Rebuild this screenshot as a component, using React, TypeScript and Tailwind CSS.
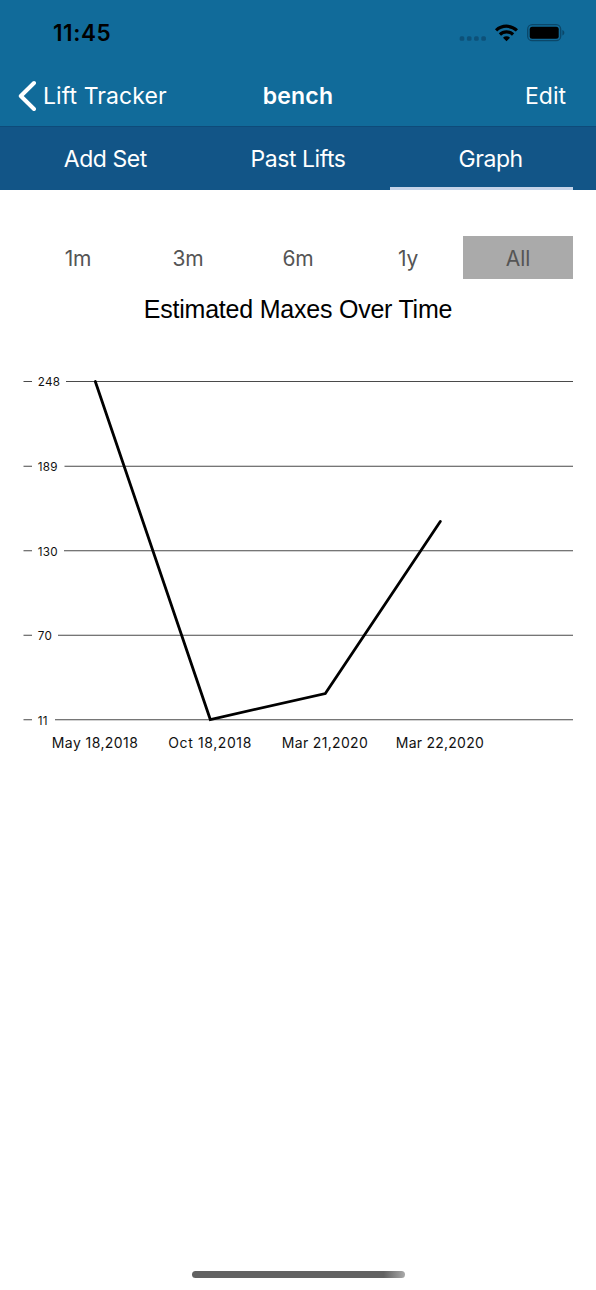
import clsx from "clsx";

const tabs = ["Add Set", "Past Lifts", "Graph"];
const ranges = ["1m", "3m", "6m", "1y", "All"];

// lineStart is where the grid line picks up after its label
const gridLines = [
  { value: 248, y: 381.5, lineStart: 66 },
  { value: 189, y: 466.2, lineStart: 64.5 },
  { value: 130, y: 550.7, lineStart: 64 },
  { value: 70, y: 635.3, lineStart: 58 },
  { value: 11, y: 719.8, lineStart: 55 },
];

const points = [
  { label: "May 18,2018", x: 95.3, y: 381.5, width: 86 },
  { label: "Oct 18,2018", x: 210.3, y: 719.5, width: 83 },
  { label: "Mar 21,2020", x: 325.3, y: 693.5, width: 86 },
  { label: "Mar 22,2020", x: 440.3, y: 521.5, width: 88 },
];

function StatusBar() {
  return (
    <div className="flex h-[66px] items-center justify-between pr-[31px] pl-[53px] text-black">
      <span className="text-[22.5px] font-semibold tracking-[0.6px]">11:45</span>
      <svg width="106" height="22" viewBox="459 22 106 22">
        <g fill="#0d5179">
          <rect x="459.7" y="36.2" width="4.6" height="4.6" rx="1.5" />
          <rect x="466.9" y="36.2" width="4.6" height="4.6" rx="1.5" />
          <rect x="474.1" y="36.2" width="4.6" height="4.6" rx="1.5" />
          <rect x="481.3" y="36.2" width="4.6" height="4.6" rx="1.5" />
        </g>
        <g fill="none" stroke="black" strokeWidth="3.2">
          <path d="M496.1 30.4 A15 15 0 0 1 516.9 30.4" />
          <path d="M499.9 34.5 A9.4 9.4 0 0 1 513.1 34.5" />
        </g>
        <path d="M503 37.7 A5 5 0 0 1 510 37.7 L506.5 41.2 Z" fill="black" />
        <rect x="527.7" y="24.7" width="33" height="16" rx="4.5" fill="none" stroke="#0b4769" strokeWidth="1.3" />
        <rect x="529.7" y="26.7" width="29" height="12" rx="2.5" fill="black" />
        <path d="M562.4 30 C565 31 565 34.5 562.4 35.5 Z" fill="#0b4769" />
      </svg>
    </div>
  );
}

function NavBar() {
  return (
    <nav className="grid h-[60px] grid-cols-[1fr_auto_1fr] items-center pt-px pr-[30px] pl-[18px] text-[23px]">
      <button className="flex items-center gap-[7px] text-left tracking-[0.08px] whitespace-nowrap">
        <svg width="18" height="32" viewBox="0 0 18 32" className="-mt-px">
          <path d="M16 3 L2.8 16 L16 29" fill="none" stroke="white" strokeWidth="4" strokeLinecap="round" strokeLinejoin="round" />
        </svg>
        Lift Tracker
      </button>
      <h1 className="pl-[12px] font-semibold tracking-[0.15px]">bench</h1>
      <button className="text-right">Edit</button>
    </nav>
  );
}

function TabBar() {
  return (
    <div className="relative h-16 border-t border-[#0e4b7a] bg-[#125587]">
      <div className="mr-[9px] ml-[9px] grid h-full grid-cols-3 pt-px text-[23px] tracking-[-0.45px]">
        {tabs.map((tab) => (
          <button key={tab}>{tab}</button>
        ))}
      </div>
      <div className="absolute right-[23px] bottom-0 h-[3px] w-[183px] bg-[#c4d3e8]" />
    </div>
  );
}

function MaxesChart() {
  return (
    <svg width="596" height="420" viewBox="0 345 596 420" className="block">
      {gridLines.map((line) => (
        <g key={line.value}>
          <path d={`M23.5 ${line.y} H32 M${line.lineStart} ${line.y} H573`} stroke="#4a4a4a" strokeWidth="1.1" />
          <text x="37.7" y={line.y + 4.8} fontSize="11.7" letterSpacing="0.3" fill="#111">
            {line.value}
          </text>
        </g>
      ))}
      <polyline
        points={points.map((p) => `${p.x},${p.y}`).join(" ")}
        fill="none"
        stroke="black"
        strokeWidth="2.8"
        strokeLinecap="round"
        strokeLinejoin="miter"
      />
      {points.map((p) => (
        <text key={p.label} x={p.x - 0.5} y="748.3" fontSize="14" textAnchor="middle" textLength={p.width} fill="#111">
          {p.label}
        </text>
      ))}
    </svg>
  );
}

export default function App() {
  return (
    <div className="flex h-[1290px] w-[596px] flex-col bg-white font-['Inter',sans-serif]">
      <header className="bg-[#116b9a] text-white">
        <StatusBar />
        <NavBar />
        <TabBar />
      </header>
      <main className="flex-1">
        <div className="mx-[23px] mt-[46px] grid h-[43px] grid-cols-5 text-[21px] text-[#555]">
          {ranges.map((range) => (
            <button key={range} className={clsx("pt-[2px] tracking-[-0.1px]", range === "All" && "bg-[#aaa]")}>
              {range}
            </button>
          ))}
        </div>
        <h2 className="mt-[12px] h-[54px] text-center font-['Liberation_Sans',Arial,sans-serif] text-[25px] leading-9 tracking-[-0.22px] text-black">
          Estimated Maxes Over Time
        </h2>
        <MaxesChart />
      </main>
      <div className="mx-auto mb-[12px] h-[7px] w-[213px] rounded-full bg-linear-to-r from-[#626262] from-90% to-[#aaa]" />
    </div>
  );
}
